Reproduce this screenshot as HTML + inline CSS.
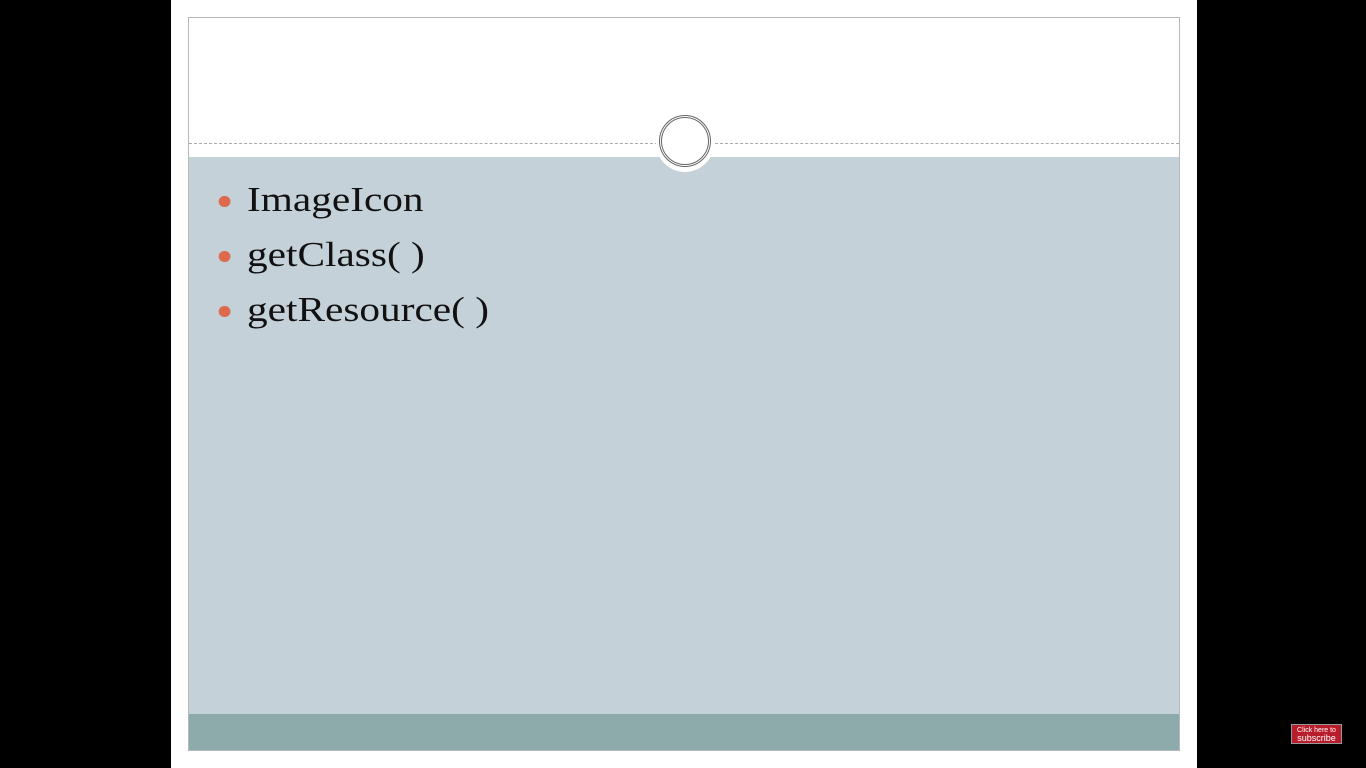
<!DOCTYPE html>
<html><head><meta charset="utf-8"><style>
html,body{margin:0;padding:0;width:1366px;height:768px;background:#000;overflow:hidden;position:relative;font-family:"Liberation Serif",serif}
.page{position:absolute;left:171px;top:0;width:1026px;height:768px;background:#fff}
.slide{position:absolute;left:188px;top:17px;width:990px;height:732px;border:1px solid #b8b8b8;background:#fff}
.body{position:absolute;left:0;top:139px;width:990px;height:557px;background:#c5d1d8}
.foot{position:absolute;left:0;top:696px;width:990px;height:36px;background:#8eabac}
.line{position:absolute;left:0;top:125px;width:990px;border-top:1px dashed #aaa}
.circ{position:absolute;left:467px;top:96px;width:58px;height:58px;border-radius:50%;background:#fff}
.circ i{position:absolute;left:3px;top:1px;width:46px;height:46px;border-radius:50%;border:3px double #666}
.item{position:absolute;left:58px;font-size:35px;color:#111;transform:scaleX(1.18);transform-origin:left}
.item b{position:absolute;left:-24px;top:16px;width:9.5px;height:11px;border-radius:50%;background:#dd6a4c}
.sub{position:absolute;left:1291px;top:724px;width:51px;height:20px;background:#b91d2c;border:1px solid #999;color:#fff;font-family:"Liberation Sans",sans-serif;font-size:7px;line-height:7px;text-align:center;box-sizing:border-box;padding-top:2px}
.sub span{font-size:9px;line-height:9px}
</style></head><body>
<div class="page"></div>
<div class="slide">
<div class="body"></div>
<div class="foot"></div>
<div class="line"></div>
<div class="circ"><i></i></div>
<div class="item" style="top:162px"><b></b>ImageIcon</div>
<div class="item" style="top:217px"><b></b>getClass( )</div>
<div class="item" style="top:272px"><b></b>getResource( )</div>
</div>
<div class="sub">Click here to<br><span>subscribe</span></div>
</body></html>
